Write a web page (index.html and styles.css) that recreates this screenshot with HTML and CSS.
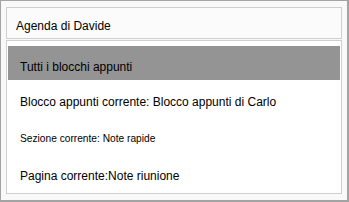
FILE: index.html
```html
<!DOCTYPE html>
<html lang="it">
  <head>
    <meta charset="UTF-8" />
    <meta name="viewport" content="width=device-width, initial-scale=1.0" />
    <title>Ambito di ricerca</title>
    <link rel="stylesheet" href="styles.css">
  </head>
  <body>
    <div class="panel">
      <div class="select-box">Agenda di Davide</div>
      <ul class="option-list">
        <li class="item active">Tutti i blocchi appunti</li>
        <li class="item">Blocco appunti corrente: Blocco appunti di Carlo</li>
        <li class="item small">Sezione corrente: Note rapide</li>
        <li class="item">Pagina corrente:Note riunione</li>
      </ul>
    </div>
  </body>
</html>
```

FILE: styles.css
```css
/* reset */
body,
ul,
li {
  margin: 0;
  padding: 0;
}

li {
  list-style-type: none;
}

body {
  font-family: "Liberation Sans", Arial, sans-serif;
  font-size: 12px;
  color: #000;
}

.panel {
  box-sizing: border-box;
  width: 349px;
  height: 202px;
  padding: 6px 5px 0 5px;
  background-color: #f9f9f9;
  border-top: 1px solid #a3a3a3;
  border-left: 1px solid #a3a3a3;
  border-right: 2px solid #a3a3a3;
  border-bottom: 2px solid #a3a3a3;
}

.select-box {
  box-sizing: border-box;
  height: 32px;
  line-height: 20px;
  padding: 8px 0 0 9px;
  border: 1px solid #cfcfcf;
  background-color: #fbfbfb;
}

.option-list {
  box-sizing: border-box;
  height: 154px;
  margin-top: 1px;
  padding: 5px 1px 0;
  display: flex;
  flex-direction: column;
  gap: 3px;
  border: 1px solid #cfcfcf;
  background-color: #fff;
}

.option-list .item {
  box-sizing: border-box;
  height: 34px;
  line-height: 20px;
  padding: 9px 0 0 12px;
  white-space: nowrap;
}

.option-list .small {
  font-size: 10.2px;
}

.option-list .active {
  padding-top: 11px;
  background-color: #949494;
}
```
